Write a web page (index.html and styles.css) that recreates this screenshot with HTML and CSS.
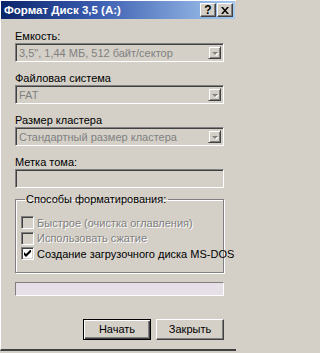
FILE: index.html
```html
<!DOCTYPE html>
<html lang="ru">
<head>
<meta charset="utf-8">
<title>Формат Диск 3,5 (A:)</title>
<link rel="stylesheet" href="styles.css">
</head>
<body>
<div class="window">
  <div class="titlebar">
    <span class="title">Формат Диск 3,5 (A:)</span>
    <div class="tbuttons">
      <span class="tbtn help">?</span>
      <span class="tbtn close"><svg width="8" height="7" viewBox="0 0 8 7"><path d="M0 0h2l2 2.5L6 0h2L5 3.5 8 7H6L4 4.5 2 7H0l3-3.5z" fill="#000"/></svg></span>
    </div>
  </div>
  <div class="content">
    <div class="field">
      <div class="label">Емкость:</div>
      <div class="combo disabled"><span class="val">3,5", 1,44 МБ, 512 байт/сектор</span><span class="drop"><i class="arrow"></i></span></div>
    </div>
    <div class="field">
      <div class="label">Файловая система</div>
      <div class="combo disabled"><span class="val">FAT</span><span class="drop"><i class="arrow"></i></span></div>
    </div>
    <div class="field">
      <div class="label">Размер кластера</div>
      <div class="combo disabled"><span class="val">Стандартный размер кластера</span><span class="drop"><i class="arrow"></i></span></div>
    </div>
    <div class="field last">
      <div class="label">Метка тома:</div>
      <div class="textbox disabled"></div>
    </div>
    <fieldset class="group">
      <legend>Способы форматирования:</legend>
      <div class="check off"><span class="box"></span><span class="ctext">Быстрое (очистка оглавления)</span></div>
      <div class="check off"><span class="box"></span><span class="ctext">Использовать сжатие</span></div>
      <div class="check on"><span class="box"><svg width="7" height="7" viewBox="0 0 7 7"><path d="M0 2v3l2 2 5-5V-1L2 4z" fill="#000"/></svg></span><span class="ctext">Создание загрузочного диска MS-DOS</span></div>
    </fieldset>
    <div class="progress"></div>
    <div class="buttons">
      <span class="btn default">Начать</span>
      <span class="btn">Закрыть</span>
    </div>
  </div>
</div>
</body>
</html>
```
FILE: styles.css
```css
html, body {
  margin: 0;
  padding: 0;
  background: #d4d0c8;
}
body {
  font-family: "Liberation Sans", Arial, sans-serif;
  font-size: 11px;
  color: #000;
}
.window {
  width: 236px;
  height: 351px;
  box-sizing: border-box;
  border-left: 1px solid #ffffff;
  border-top: 1px solid #ffffff;
  border-bottom: 2px solid #404040;
  background: #d4d0c8;
  display: flex;
  flex-direction: column;
}
.titlebar {
  height: 18px;
  margin-right: 1px;
  background: linear-gradient(to right, #0a246a 0%, #3a5cb0 40%, #a6caf0 100%);
  display: flex;
  align-items: center;
  justify-content: space-between;
  padding-left: 3px;
  padding-right: 2px;
}
.title {
  color: #fff;
  font-weight: bold;
  font-size: 11.5px;
  white-space: nowrap;
}
.tbuttons {
  display: flex;
  gap: 1px;
}
.tbtn {
  width: 16px;
  height: 14px;
  box-sizing: border-box;
  background: #d4d0c8;
  border: 1px solid;
  border-color: #ffffff #404040 #404040 #ffffff;
  box-shadow: inset -1px -1px #808080;
  display: flex;
  align-items: center;
  justify-content: center;
  font-weight: bold;
  font-size: 12px;
  line-height: 12px;
}
.content {
  padding: 11px 12px 0 14px;
  display: flex;
  flex-direction: column;
}
.field {
  margin-bottom: 10px;
}
.field.last {
  margin-bottom: 0;
}
.label {
  height: 13px;
  line-height: 12px;
  white-space: nowrap;
}
.combo, .textbox {
  height: 19px;
  box-sizing: border-box;
  border: 1px solid;
  border-color: #808080 #ffffff #ffffff #808080;
  box-shadow: inset 1px 1px #404040, inset -1px -1px #d4d0c8;
  background: #d4d0c8;
  display: flex;
  align-items: center;
  padding: 2px 2px 2px 3px;
}
.combo .val {
  flex: 1;
  color: #808080;
  white-space: nowrap;
  overflow: hidden;
}
.drop {
  width: 13px;
  height: 13px;
  box-sizing: border-box;
  border: 1px solid;
  border-color: #d4d0c8 #404040 #404040 #d4d0c8;
  box-shadow: inset 1px 1px #ffffff, inset -1px -1px #808080;
  background: #d4d0c8;
  display: flex;
  align-items: center;
  justify-content: center;
}
.arrow {
  width: 0;
  height: 0;
  border-left: 3px solid transparent;
  border-right: 3px solid transparent;
  border-top: 3px solid #808080;
  filter: drop-shadow(1px 1px 0 #ffffff);
  margin-top: 1px;
}
.group {
  margin: 5px 0 0 0;
  padding: 9px 5px 10px 5px;
  border: 1px solid #808080;
  box-shadow: 1px 1px 0 #ffffff, inset 1px 1px 0 #ffffff;
  min-width: 0;
}
.group legend {
  padding: 0 2px 0 1px;
  margin-left: 4px;
  line-height: 13px;
  white-space: nowrap;
}
.check {
  height: 15.5px;
  display: flex;
  align-items: center;
  gap: 3px;
  white-space: nowrap;
}
.box {
  width: 13px;
  height: 13px;
  box-sizing: border-box;
  border: 1px solid;
  border-color: #808080 #ffffff #ffffff #808080;
  box-shadow: inset 1px 1px #404040, inset -1px -1px #d4d0c8;
  background: #ffffff;
  display: flex;
  align-items: center;
  justify-content: center;
  flex: none;
}
.check.off .box {
  background: #d4d0c8;
}
.check.off .ctext {
  color: #808080;
  text-shadow: 1px 1px 0 #ffffff;
}
.progress {
  margin-top: 9px;
  height: 14px;
  box-sizing: border-box;
  border: 1px solid;
  border-color: #808080 #ffffff #ffffff #808080;
  background: #e6dfe8;
}
.buttons {
  margin-top: 23px;
  display: flex;
  justify-content: flex-end;
  gap: 5px;
}
.btn {
  width: 68px;
  height: 21px;
  box-sizing: border-box;
  border: 1px solid;
  border-color: #ffffff #404040 #404040 #ffffff;
  box-shadow: inset -1px -1px #808080;
  display: flex;
  align-items: center;
  justify-content: center;
}
.btn.default {
  border: 1px solid #000;
  box-shadow: inset 1px 1px #ffffff, inset -1px -1px #404040, inset -2px -2px #808080;
}
```
